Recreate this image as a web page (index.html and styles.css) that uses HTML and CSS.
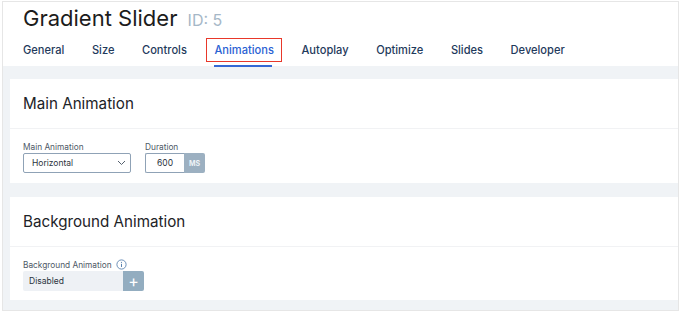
FILE: index.html
```html
<!doctype html>
<html>
<head>
<meta charset="utf-8">
<title>Gradient Slider</title>
<link rel="stylesheet" href="styles.css">
</head>

<body>
	<div class="frame">
		<div class="head">
			<h1 class="title">Gradient Slider <span class="title-id">ID: 5</span></h1>
			<nav class="tabs">
				<a class="tab" href="#">General</a>
				<a class="tab" href="#">Size</a>
				<a class="tab" href="#">Controls</a>
				<a class="tab active" href="#">Animations</a>
				<a class="tab" href="#">Autoplay</a>
				<a class="tab" href="#">Optimize</a>
				<a class="tab" href="#">Slides</a>
				<a class="tab" href="#">Developer</a>
			</nav>
		</div>

		<div class="content">
			<section class="card">
				<div class="card-head">Main Animation</div>
				<div class="card-body">
					<div class="field">
						<label class="label">Main Animation</label>
						<div class="select">
							<span>Horizontal</span>
							<svg width="9" height="6" viewBox="0 0 9 6"><path d="M1 1l3.5 3.5L8 1" fill="none" stroke="#55606e" stroke-width="1"/></svg>
						</div>
					</div>
					<div class="field">
						<label class="label">Duration</label>
						<div class="number">
							<span class="number-val">600</span>
							<span class="unit">MS</span>
						</div>
					</div>
				</div>
			</section>

			<section class="card card-2">
				<div class="card-head">Background Animation</div>
				<div class="card-body body-2">
					<div class="field">
						<label class="label">Background Animation
							<svg class="info" width="11" height="11" viewBox="0 0 11 11"><circle cx="5.5" cy="5.5" r="4.6" fill="none" stroke="#5b83b0" stroke-width="0.9"/><path d="M5.5 4.8v3.2" stroke="#5b83b0" stroke-width="1"/><circle cx="5.5" cy="3.3" r="0.6" fill="#5b83b0"/></svg>
						</label>
						<div class="picker">
							<span class="picker-val">Disabled</span>
							<span class="plus">+</span>
						</div>
					</div>
				</div>
			</section>
		</div>
	</div>
</body>

</html>
```

FILE: styles.css
```css
body{
	margin: 0;
	background-color: #fff;
	font-family: Inter, "Noto Sans", sans-serif;
}
.frame{
	margin: 1px 0 0 2px;
	width: 677px;
	height: 310px;
	border: 1px solid #e6e6e6;
	box-sizing: border-box;
	display: flex;
	flex-direction: column;
	overflow: hidden;
}
.head{
	height: 64px;
	padding-left: 20px;
	background: #fff;
	flex-shrink: 0;
}
.title{
	margin: 2px 0 0;
	font-size: 22px;
	line-height: 29px;
	font-weight: 400;
	color: #1c1c1c;
}
.title-id{
	font-size: 16px;
	color: #a6b7c7;
	margin-left: 4px;
}
.tabs{
	display: flex;
	margin-top: 3px;
	margin-left: -8px;
}
.tab{
	position: relative;
	padding: 0 7px;
	margin-right: 11.6px;
	border: 1px solid transparent;
	line-height: 22px;
	font-size: 11.1px;
	font-weight: 500;
	color: #1f3a5c;
	text-decoration: none;
}
.tab.active{
	border-color: #e8382a;
	color: #2a62d3;
}
.tab.active::after{
	content: "";
	position: absolute;
	left: 7px;
	right: 9px;
	bottom: -6px;
	height: 2px;
	background: #3568d4;
}
.content{
	flex: 1;
	background: #f0f3f6;
	padding: 13px 0 0 7px;
}
.card{
	background: #fff;
	height: 104px;
	display: flex;
	flex-direction: column;
}
.card-2{
	margin-top: 14px;
	height: 103px;
}
.card-head{
	height: 49px;
	padding-left: 13px;
	display: flex;
	align-items: center;
	font-size: 15.2px;
	color: #1d2327;
	border-bottom: 1px solid #f1f2f4;
}
.card-body{
	display: flex;
	gap: 14px;
	padding: 12px 13px 0;
}
.body-2{
	padding-top: 11px;
}
.field{
	display: flex;
	flex-direction: column;
}
.label{
	font-size: 8.3px;
	line-height: 12px;
	color: #4e5966;
	display: flex;
	align-items: center;
	gap: 4px;
}
.body-2 .label{
	height: 13px;
}
.select{
	width: 108px;
	height: 20px;
	box-sizing: border-box;
	border: 1px solid #8fa2b6;
	border-radius: 2px;
	display: flex;
	align-items: center;
	justify-content: space-between;
	padding: 0 4px 0 8px;
	font-size: 8.5px;
	color: #2b333d;
}
.number{
	display: flex;
	height: 20px;
}
.number-val{
	width: 39px;
	box-sizing: border-box;
	border: 1px solid #8fa2b6;
	border-right: none;
	border-radius: 2px 0 0 2px;
	display: flex;
	align-items: center;
	justify-content: center;
	font-size: 8.5px;
	color: #2b333d;
}
.unit{
	width: 21px;
	background: #9cb0c1;
	border-radius: 0 2px 2px 0;
	color: #eef3f7;
	font-size: 7px;
	font-weight: 700;
	display: flex;
	align-items: center;
	justify-content: center;
}
.picker{
	display: flex;
	height: 20px;
}
.picker-val{
	width: 100px;
	background: #eef1f5;
	border-radius: 2px 0 0 2px;
	padding-left: 6px;
	box-sizing: border-box;
	display: flex;
	align-items: center;
	font-size: 8.5px;
	color: #2b333d;
}
.plus{
	width: 21px;
	background: #93adc0;
	border-radius: 0 2px 2px 0;
	color: #fff;
	font-size: 16px;
	line-height: 20px;
	text-align: center;
}
```
